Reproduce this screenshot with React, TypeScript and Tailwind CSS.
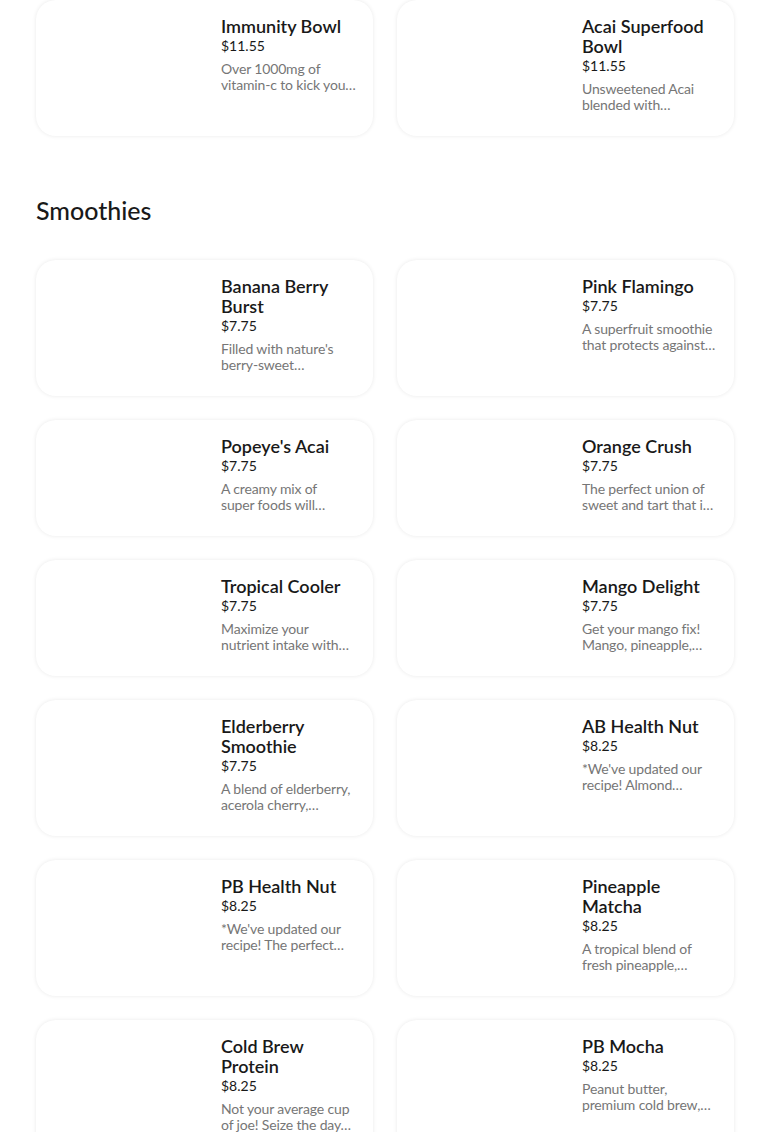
import React from "react";

type Item = { name: string; price: string; desc: [string, string] };

const bowls: Item[] = [
  { name: "Immunity Bowl", price: "$11.55", desc: ["Over 1000mg of", "vitamin-c to kick you…"] },
  { name: "Acai Superfood Bowl", price: "$11.55", desc: ["Unsweetened Acai", "blended with…"] },
];

const smoothies: Item[] = [
  { name: "Banana Berry Burst", price: "$7.75", desc: ["Filled with nature's", "berry-sweet…"] },
  { name: "Pink Flamingo", price: "$7.75", desc: ["A superfruit smoothie", "that protects against…"] },
  { name: "Popeye's Acai", price: "$7.75", desc: ["A creamy mix of", "super foods will…"] },
  { name: "Orange Crush", price: "$7.75", desc: ["The perfect union of", "sweet and tart that i…"] },
  { name: "Tropical Cooler", price: "$7.75", desc: ["Maximize your", "nutrient intake with…"] },
  { name: "Mango Delight", price: "$7.75", desc: ["Get your mango fix!", "Mango, pineapple,…"] },
  { name: "Elderberry Smoothie", price: "$7.75", desc: ["A blend of elderberry,", "acerola cherry,…"] },
  { name: "AB Health Nut", price: "$8.25", desc: ["*We've updated our", "recipe! Almond…"] },
  { name: "PB Health Nut", price: "$8.25", desc: ["*We've updated our", "recipe! The perfect…"] },
  { name: "Pineapple Matcha", price: "$8.25", desc: ["A tropical blend of", "fresh pineapple,…"] },
  { name: "Cold Brew Protein", price: "$8.25", desc: ["Not your average cup", "of joe! Seize the day…"] },
  { name: "PB Mocha", price: "$8.25", desc: ["Peanut butter,", "premium cold brew,…"] },
];

function Card({ item }: { item: Item }) {
  return (
    <div className="flex rounded-[20px] bg-white shadow-[0_0_4px_rgba(0,0,0,0.09)] pb-[23px]">
      <div className="w-[185px] shrink-0" />
      <div className="flex-1 min-w-0 pt-4 pr-4">
        <div className="text-[18px] leading-[20px] font-semibold text-[#191919]">{item.name}</div>
        <div className="text-[14px] leading-[20px] text-[#191919]">{item.price}</div>
        <div className="mt-[5px] text-[14px] leading-[16px] tracking-[-0.15px] text-[#767676]">
          <div className="whitespace-nowrap">{item.desc[0]}</div>
          <div className="whitespace-nowrap">{item.desc[1]}</div>
        </div>
      </div>
    </div>
  );
}

export default function App() {
  return (
    <div className="min-h-screen bg-white px-[36px] overflow-hidden" style={{ fontFamily: "Lato, 'Noto Sans', sans-serif" }}>
      <div className="grid grid-cols-2 gap-6">
        {bowls.map((b) => (
          <Card key={b.name} item={b} />
        ))}
      </div>
      <h2 className="mt-[58px] mb-[34px] text-[25px] leading-[32px] font-medium text-[#191919]">Smoothies</h2>
      <div className="grid grid-cols-2 gap-6">
        {smoothies.map((s) => (
          <Card key={s.name} item={s} />
        ))}
      </div>
    </div>
  );
}
